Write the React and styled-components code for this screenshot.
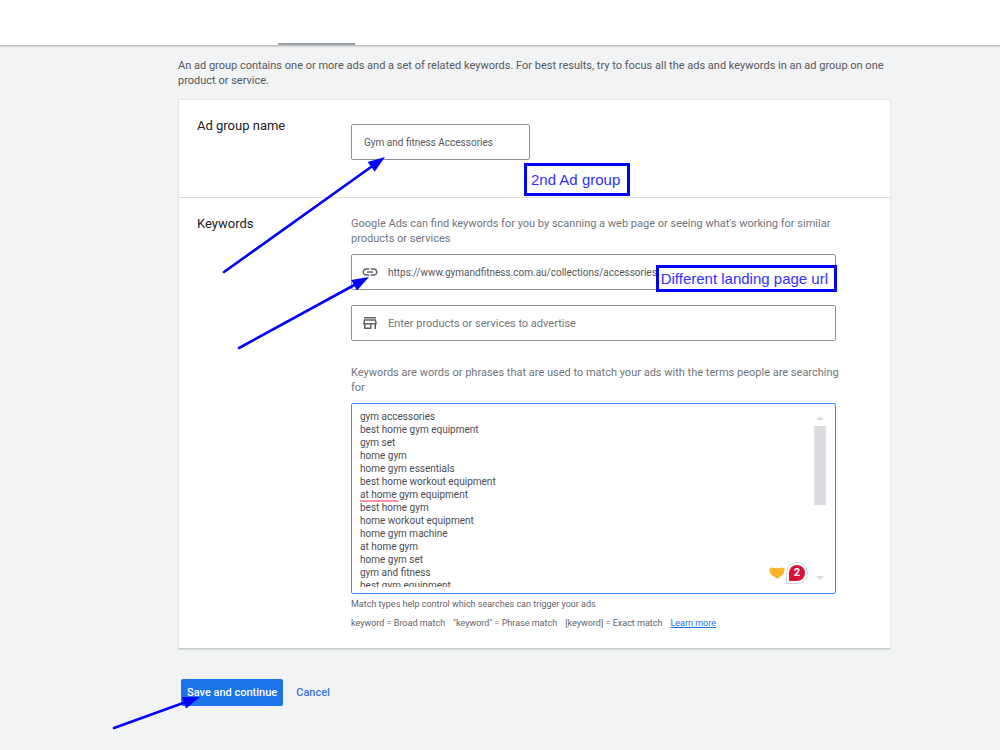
import React from "react"
import styled, { createGlobalStyle } from "styled-components"
import { MdLink, MdOutlineStore } from "react-icons/md"

const keywords = [
  "gym accessories",
  "best home gym equipment",
  "gym set",
  "home gym",
  "home gym essentials",
  "best home workout equipment",
  "at home gym equipment",
  "best home gym",
  "home workout equipment",
  "home gym machine",
  "at home gym",
  "home gym set",
  "gym and fitness",
  "best gym equipment",
]

//Styles
const GlobalStyle = createGlobalStyle`
  * {
    box-sizing: border-box;
  }
  body {
    margin: 0;
    min-height: 100vh;
    background-color: #f1f3f4;
    color: #3c4043;
    font-family: Roboto, "Liberation Sans", sans-serif;
    font-size: 11px;
    line-height: 15px;
  }
  input,
  textarea,
  button {
    font: inherit;
  }
`
const Header = styled.header`
  height: 45px;
  padding-left: 278px;
  display: flex;
  align-items: flex-end;
  background-color: white;
  box-shadow: 0 1px 2px rgba(60, 64, 67, 0.4);
`
const TabEdge = styled.div`
  width: 77px;
  height: 2px;
  background-color: #9aa0a3;
`
const Main = styled.main`
  margin: 13px 109px 0 178px;
`
const Intro = styled.p`
  margin: 0 0 11px;
  color: #55585c;
`
const Card = styled.div`
  background-color: white;
  border: 1px solid #e3e5e6;
  border-bottom-color: #c9cbcd;
  border-radius: 2px;
  box-shadow: 0 1px 1px rgba(60, 64, 67, 0.15);
`
const Section = styled.section`
  display: grid;
  grid-template-columns: 154px minmax(0, 1fr);
  padding: 18px 54px ${props => props.$bottom}px 18px;
  & + & {
    border-top: 1px solid #dadce0;
  }
`
const Title = styled.h2`
  margin: 0;
  font-size: 13px;
  line-height: 16px;
  font-weight: 400;
  color: #202124;
`
const Hint = styled.p`
  display: block;
  margin: ${props => props.$top || 0}px 0 8px;
  color: #70757a;
  white-space: nowrap;
`
const Field = styled.div`
  position: relative;
  display: flex;
  align-items: center;
  width: ${props => props.$width || "100%"};
  height: 36px;
  margin-top: ${props => props.$top || 0}px;
  padding-left: ${props => (props.$icon ? 9 : 12)}px;
  border: 1px solid #8f9398;
  border-radius: 2px;
  svg.icon {
    flex: none;
    width: 18px;
    height: 18px;
    margin-right: 9px;
    color: #5f6368;
  }
`
const Input = styled.input`
  flex: 1;
  min-width: 0;
  padding: 0;
  border: 0;
  outline: 0;
  background: none;
  color: #55585c;
  font-size: ${props => (props.$small ? 10 : 11)}px;
  &::placeholder {
    color: #70757a;
    opacity: 1;
  }
`
const KeywordBox = styled.div`
  position: relative;
  display: flex;
  padding: 6px 9px 6px 8px;
  border: 1px solid #4285f4;
  border-radius: 2px;
`
const KeywordArea = styled.textarea`
  flex: 1;
  height: 177px;
  padding: 0;
  border: 0;
  outline: 0;
  resize: none;
  overflow: hidden;
  color: #4a4d51;
  font-size: 10px;
  line-height: 13px;
`
const Scrollbar = styled.div`
  display: flex;
  flex-direction: column;
  align-items: center;
  width: 12px;
  padding: 6px 0 7px;
`
const ScrollArrow = styled.span`
  border: 4px solid transparent;
  border-top-width: ${props => (props.$down ? 4 : 0)}px;
  border-bottom-width: ${props => (props.$down ? 0 : 4)}px;
  border-top-color: #dadce0;
  border-bottom-color: #dadce0;
  margin-top: ${props => (props.$down ? "auto" : 0)};
`
const ScrollThumb = styled.span`
  width: 12px;
  height: 79px;
  margin-top: 6px;
  background-color: #dadce0;
`
const SpellMark = styled.span`
  position: absolute;
  left: 8px;
  top: 96px;
  width: 38px;
  height: 2px;
  background-color: #ff8fa8;
`
const Checker = styled.div`
  position: absolute;
  right: 27px;
  bottom: 9px;
  display: flex;
  align-items: center;
  gap: 1px;
`
const CheckerCount = styled.span`
  display: flex;
  align-items: center;
  justify-content: center;
  width: 22px;
  height: 22px;
  border: 1px solid #d5d7e0;
  border-radius: 11px 11px 11px 0;
  background-color: white;
  span {
    width: 16px;
    height: 16px;
    border-radius: 8px 8px 8px 0;
    background-color: #d6143a;
    color: white;
    font-weight: 700;
    line-height: 16px;
    text-align: center;
  }
`
const Legend = styled.p`
  display: flex;
  flex-wrap: wrap;
  column-gap: 8px;
  margin: ${props => props.$top}px 0 0;
  font-size: 9px;
  color: #5f6368;
  a {
    color: #1a73e8;
  }
`
const Actions = styled.div`
  display: flex;
  gap: 10px;
  margin: 30px 0 0 3px;
`
const Button = styled.button`
  position: relative;
  height: 27px;
  padding: 0 ${props => (props.$primary ? 6 : 3)}px;
  border: 0;
  border-radius: 2px;
  background-color: ${props => (props.$primary ? "#1a73e8" : "transparent")};
  color: ${props => (props.$primary ? "white" : "#4170e0")};
  font-weight: 500;
`
const Note = styled.div`
  position: absolute;
  z-index: 1;
  left: ${props => props.$left};
  right: ${props => props.$right};
  top: ${props => props.$top}px;
  padding: ${props => props.$pad};
  border: 3px solid #0000ff;
  background-color: white;
  color: #3030ff;
  font-family: "Liberation Sans", sans-serif;
  font-size: 15px;
  line-height: 21px;
  white-space: nowrap;
`
const ArrowSvg = styled.svg`
  position: absolute;
  z-index: 2;
  left: ${props => props.$left}px;
  top: ${props => props.$top}px;
  overflow: visible;
  pointer-events: none;
`

// Points from the lower left to the upper right corner of its box
const Arrow = ({ left, top, width, height }) => {
  const angle = (Math.atan2(-height, width) * 180) / Math.PI
  const length = Math.hypot(width, height)
  return (
    <ArrowSvg
      $left={left}
      $top={top}
      width={width}
      height={height}
      aria-hidden="true"
    >
      <g transform={`translate(0 ${height}) rotate(${angle})`} fill="#0000ff">
        <path
          d={`M0 0H${length - 12}`}
          stroke="#0000ff"
          strokeWidth="2.6"
          strokeLinecap="round"
        />
        <path d={`M${length} 0l-17 -6v12z`} />
      </g>
    </ArrowSvg>
  )
}

const Handshake = () => (
  <svg width="16" height="12" viewBox="0 0 16 12" aria-hidden="true">
    <path
      d="M0.3 1.4L3.6 0.4L5.6 1.2L8 0.8L10.3 1.2L12.4 0.3L15.7 1.5L15 6L12.6 8.4L9.5 11.2L7.8 11.6L3.2 8.4L1 6.2z"
      fill="#fbb72c"
    />
    <path
      d="M5.6 1.3L4.7 4.2L6.6 4.8L8.4 3.4L12.8 7.4M3.5 7.6L5 6.2M5 9.1L6.4 7.6M6.8 10.4L7.9 9"
      fill="none"
      stroke="#e0901c"
      strokeWidth="0.6"
    />
  </svg>
)

const App = () => (
  <>
    <GlobalStyle />
    <Header>
      <TabEdge />
    </Header>
    <Main>
      <Intro>
        An ad group contains one or more ads and a set of related keywords. For
        best results, try to focus all the ads and keywords in an ad group on
        one
        <br />
        product or service.
      </Intro>
      <Card>
        <Section $bottom={37}>
          <Title as="label" htmlFor="group-name">
            Ad group name
          </Title>
          <Field $width="179px" $top={6}>
            <Input
              id="group-name"
              $small
              defaultValue="Gym and fitness Accessories"
            />
            <Note $left="172px" $top={38} $pad="3px 7px 3px 4px">
              2nd Ad group
            </Note>
            <Arrow left={-128} top={32} width={161} height={115} />
          </Field>
        </Section>
        <Section $bottom={17}>
          <Title>Keywords</Title>
          <div>
            <Hint>
              Google Ads can find keywords for you by scanning a web page or
              seeing what's working for similar
              <br />
              products or services
            </Hint>
            <Field $icon>
              <MdLink className="icon" />
              <Input
                $small
                type="url"
                aria-label="Landing page URL"
                defaultValue="https://www.gymandfitness.com.au/collections/accessories"
              />
              <Note $right="-2px" $top={10} $pad="0 6px 0 2px">
                Different landing page url
              </Note>
              <Arrow left={-113} top={22} width={130} height={71} />
            </Field>
            <Field $icon $top={15}>
              <MdOutlineStore className="icon" />
              <Input
                aria-label="Products or services"
                placeholder="Enter products or services to advertise"
              />
            </Field>
            <Hint as="label" htmlFor="keywords" $top={24}>
              Keywords are words or phrases that are used to match your ads with
              the terms people are searching
              <br />
              for
            </Hint>
            <KeywordBox>
              <KeywordArea
                id="keywords"
                spellCheck={false}
                defaultValue={keywords.join("\n")}
              />
              <SpellMark />
              <Checker>
                <Handshake />
                <CheckerCount>
                  <span>2</span>
                </CheckerCount>
              </Checker>
              <Scrollbar aria-hidden="true">
                <ScrollArrow />
                <ScrollThumb />
                <ScrollArrow $down />
              </Scrollbar>
            </KeywordBox>
            <Legend $top={3}>
              Match types help control which searches can trigger your ads
            </Legend>
            <Legend $top={4}>
              <span>keyword = Broad match</span>
              <span>"keyword" = Phrase match</span>
              <span>[keyword] = Exact match</span>
              <a href="#match-types">Learn more</a>
            </Legend>
          </div>
        </Section>
      </Card>
      <Actions>
        <Button type="button" $primary>
          Save and continue
          <Arrow left={-67} top={18} width={86} height={31} />
        </Button>
        <Button type="button">Cancel</Button>
      </Actions>
    </Main>
  </>
)

export default App
